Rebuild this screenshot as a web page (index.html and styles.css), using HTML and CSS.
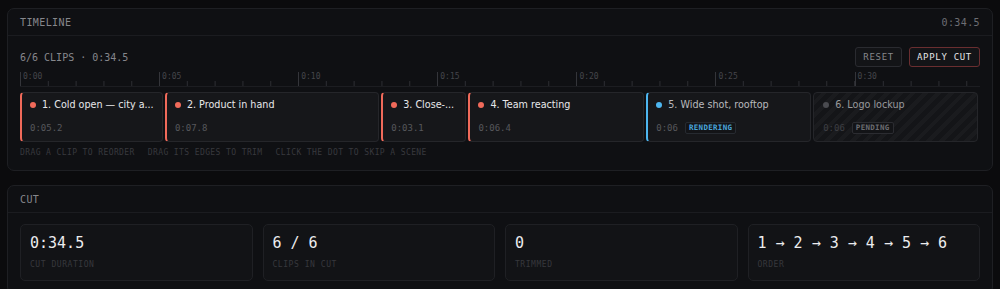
FILE: index.html
```html
<!DOCTYPE html>
<html lang="en">
<head>
<meta charset="utf-8">
<title>Timeline</title>
<link rel="stylesheet" href="styles.css">
</head>
<body>
<div class="page">
  <section class="panel">
    <header class="panel-head">
      <span class="panel-title">TIMELINE</span>
      <span class="panel-meta">0:34.5</span>
    </header>
    <div class="panel-body">
      <div class="toolbar">
        <span class="count">6/6 CLIPS · 0:34.5</span>
        <div class="actions">
          <button class="btn">RESET</button>
          <button class="btn btn-primary">APPLY CUT</button>
        </div>
      </div>
      <div class="ruler">
        <div class="seg" style="flex-grow:5"><span>0:00</span></div>
        <div class="seg" style="flex-grow:5"><span>0:05</span></div>
        <div class="seg" style="flex-grow:5"><span>0:10</span></div>
        <div class="seg" style="flex-grow:5"><span>0:15</span></div>
        <div class="seg" style="flex-grow:5"><span>0:20</span></div>
        <div class="seg" style="flex-grow:5"><span>0:25</span></div>
        <div class="seg" style="flex-grow:4.5"><span>0:30</span></div>
      </div>
      <div class="track">
        <div class="slot" style="flex-grow:5.2">
          <div class="clip">
            <div class="clip-title"><i class="dot"></i><span class="name">1. Cold open — city a...</span></div>
            <div class="clip-foot"><span class="dur">0:05.2</span></div>
          </div>
        </div>
        <div class="slot" style="flex-grow:7.8">
          <div class="clip">
            <div class="clip-title"><i class="dot"></i><span class="name">2. Product in hand</span></div>
            <div class="clip-foot"><span class="dur">0:07.8</span></div>
          </div>
        </div>
        <div class="slot" style="flex-grow:3.1">
          <div class="clip">
            <div class="clip-title"><i class="dot"></i><span class="name">3. Close-...</span></div>
            <div class="clip-foot"><span class="dur">0:03.1</span></div>
          </div>
        </div>
        <div class="slot" style="flex-grow:6.4">
          <div class="clip">
            <div class="clip-title"><i class="dot"></i><span class="name">4. Team reacting</span></div>
            <div class="clip-foot"><span class="dur">0:06.4</span></div>
          </div>
        </div>
        <div class="slot" style="flex-grow:6">
          <div class="clip clip-rendering">
            <div class="clip-title"><i class="dot"></i><span class="name">5. Wide shot, rooftop</span></div>
            <div class="clip-foot"><span class="dur">0:06</span><span class="badge badge-blue">RENDERING</span></div>
          </div>
        </div>
        <div class="slot" style="flex-grow:6">
          <div class="clip clip-pending">
            <div class="clip-title"><i class="dot"></i><span class="name">6. Logo lockup</span></div>
            <div class="clip-foot"><span class="dur">0:06</span><span class="badge">PENDING</span></div>
          </div>
        </div>
      </div>
      <div class="hints">
        <span>DRAG A CLIP TO REORDER</span>
        <span>DRAG ITS EDGES TO TRIM</span>
        <span>CLICK THE DOT TO SKIP A SCENE</span>
      </div>
    </div>
  </section>

  <section class="panel panel-cut">
    <header class="panel-head">
      <span class="panel-title">CUT</span>
    </header>
    <div class="panel-body stats">
      <div class="stat"><div class="stat-value">0:34.5</div><div class="stat-label">CUT DURATION</div></div>
      <div class="stat"><div class="stat-value">6 / 6</div><div class="stat-label">CLIPS IN CUT</div></div>
      <div class="stat"><div class="stat-value">0</div><div class="stat-label">TRIMMED</div></div>
      <div class="stat"><div class="stat-value">1 → 2 → 3 → 4 → 5 → 6</div><div class="stat-label">ORDER</div></div>
    </div>
  </section>
</div>
</body>
</html>
```

FILE: styles.css
```css
* { box-sizing: border-box; margin: 0; padding: 0; }

html, body {
  background: #0b0b0d;
}

body {
  font-family: "DejaVu Sans Mono", "Liberation Mono", monospace;
  color: #8b8c91;
}

.page {
  padding: 8px 7px;
  display: flex;
  flex-direction: column;
  gap: 14px;
}

.panel {
  background: #0f1013;
  border: 1px solid #1e1f23;
  border-radius: 7px;
}

.panel-head {
  height: 27px;
  display: flex;
  align-items: center;
  justify-content: space-between;
  padding: 0 12px;
  border-bottom: 1px solid #1b1c20;
  font-size: 10px;
  letter-spacing: 0.4px;
}

.panel-title { color: #86878c; }
.panel-meta { color: #6d6e73; }

.panel-body {
  padding: 11px 12px 12px;
}

.toolbar {
  height: 20px;
  display: flex;
  align-items: center;
  justify-content: space-between;
}

.count {
  font-size: 10px;
  color: #86878c;
}

.actions {
  display: flex;
  gap: 7px;
}

.btn {
  height: 20px;
  padding: 0 7px;
  background: #131417;
  border: 1px solid #2a2b30;
  border-radius: 3px;
  font-family: "DejaVu Sans Mono", monospace;
  font-size: 9px;
  letter-spacing: 0.7px;
  color: #85868b;
}

.btn-primary {
  border-color: #6a2e30;
  color: #e4e4e6;
}

.ruler {
  margin-top: 5px;
  height: 15px;
  display: flex;
  border-bottom: 1px solid #1c1d21;
}

.seg {
  flex-basis: 0;
  border-left: 1px solid #34353a;
  background-image: linear-gradient(to right, #2c2d32 1px, transparent 1px);
  background-size: 27.826px 5px;
  background-position: -1px bottom;
  background-repeat: repeat-x;
  padding-left: 2px;
}

.seg span {
  display: block;
  font-size: 8px;
  line-height: 9px;
  color: #45464b;
}

.track {
  margin-top: 5px;
  display: flex;
}

.slot {
  flex-basis: 0;
  min-width: 0;
  padding-right: 2px;
}

.clip {
  height: 50px;
  background: #16171a;
  border: 1px solid #25262a;
  border-left: 2px solid #f06a5a;
  border-radius: 4px;
  padding: 5px 5px 0 8px;
  display: flex;
  flex-direction: column;
  gap: 10px;
}

.clip-title {
  display: flex;
  align-items: center;
  gap: 6px;
  height: 14px;
  min-width: 0;
}

.dot {
  flex: none;
  width: 6px;
  height: 6px;
  border-radius: 50%;
  background: #f06a5a;
}

.name {
  font-family: "DejaVu Sans", sans-serif;
  font-size: 9.6px;
  line-height: 14px;
  color: #e8e8ea;
  white-space: nowrap;
  min-width: 0;
}

.clip-foot {
  display: flex;
  align-items: center;
  gap: 7px;
  height: 12px;
}

.dur {
  font-size: 9px;
  color: #56575c;
}

.badge {
  height: 12px;
  padding: 0 3px;
  border: 1px solid #2b2c31;
  border-radius: 2px;
  background: #131417;
  font-size: 7.5px;
  line-height: 10px;
  letter-spacing: 0.3px;
  color: #6c6d72;
  font-weight: bold;
}

.badge-blue {
  color: #4aa6dc;
  border-color: #262a30;
}

.clip-rendering {
  border-left-color: #4db6f0;
}
.clip-rendering .dot { background: #4db6f0; }
.clip-rendering .name { color: #b9babe; }

.clip-pending {
  border-left: 1px solid #25262a;
  padding-left: 9px;
  background: repeating-linear-gradient(135deg, #141518 0 5px, #1a1b1e 5px 9px);
}
.clip-pending .dot { background: #4a4b50; }
.clip-pending .name { color: #98999d; }
.clip-pending .dur { color: #3e3f44; }

.hints {
  margin-top: 6px;
  display: flex;
  gap: 13px;
  font-size: 8px;
  line-height: 10px;
  letter-spacing: 0.4px;
  color: #38393e;
}

.stats {
  padding-top: 11px;
  display: grid;
  grid-template-columns: repeat(4, 1fr);
  gap: 10px;
}

.stat {
  height: 57px;
  background: #121316;
  border: 1px solid #1f2024;
  border-radius: 5px;
  padding: 9px 9px 0;
}

.stat-value {
  font-size: 15px;
  line-height: 19px;
  color: #ececee;
}

.stat-label {
  margin-top: 7px;
  font-size: 8px;
  line-height: 10px;
  letter-spacing: 0.55px;
  color: #37383d;
}
```
